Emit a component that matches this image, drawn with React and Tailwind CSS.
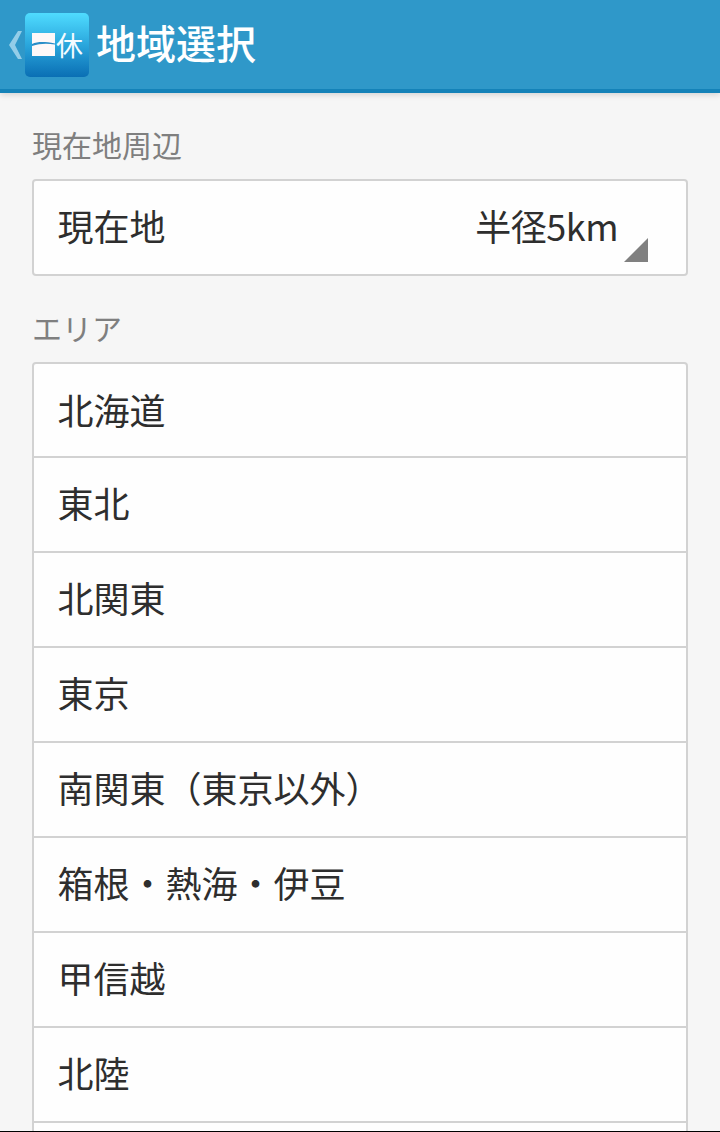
const items = ["北海道", "東北", "北関東", "東京", "南関東（東京以外）", "箱根・熱海・伊豆", "甲信越", "北陸", ""];

function Logo() {
  return (
    <div className="relative w-[64px] h-[64px] rounded-[5px] bg-gradient-to-b from-[#4fdcff] via-[#2aa6dc] to-[#0a6fb4] overflow-hidden shrink-0">
      <div className="absolute left-[7px] top-[20px] w-[23px] h-[23px] bg-[#fdf8f8]">
        <svg viewBox="0 0 23 23" className="w-full h-full">
          <path d="M0 11 C6 8.5 12 8.5 23 10.5 L23 11.5 C14 10 8 10.5 0 13 Z" fill="#2a8ec8" />
        </svg>
      </div>
      <span className="absolute left-[31px] top-[17px] text-[27px] leading-[30px] text-[#f4fbff]">休</span>
    </div>
  );
}

export default function App() {
  return (
    <div className="w-[720px] h-[1132px] flex flex-col bg-[#f6f6f6] font-['Noto_Sans_CJK_JP','Noto_Sans',sans-serif]">
      <div className="flex-1 min-h-0 overflow-hidden">
        <header className="h-[93px] bg-[#2f98c9] border-b-[4px] border-[#1482b8] shadow-[0_2px_6px_rgba(0,0,0,0.14)] flex items-start pt-[13px] pl-[8px]">
          <svg width="17" height="28" viewBox="0 0 17 28" className="mt-[18px] shrink-0">
            <path d="M10 0 L14 0 L7 14 L14 28 L10 28 L1 14 Z" fill="#93cde8" />
          </svg>
          <Logo />
          <h1 className="ml-[7px] text-[40px] leading-[58px] font-medium text-white">地域選択</h1>
        </header>
        <main className="px-[32px]">
          <h2 className="mt-[33px] h-[36px] text-[30px] leading-[36px] text-[#7f7f7f]">現在地周辺</h2>
          <div className="mt-[17px] h-[97px] rounded-[4px] border-2 border-[#d2d2d2] bg-[#fefefe] flex items-center justify-between pl-[23.5px] pb-[6px] relative">
            <span className="text-[36px] leading-[48px] text-[#2e2e2e]">現在地</span>
            <span className="text-[36px] leading-[48px] tracking-[-0.5px] text-[#2e2e2e] mr-[68px]">半径5km</span>
            <div className="absolute right-[38px] bottom-[12px] w-0 h-0 border-l-[24px] border-l-transparent border-b-[24px] border-b-[#808080]" />
          </div>
          <h2 className="mt-[33px] h-[36px] text-[30px] leading-[36px] text-[#7f7f7f]">エリア</h2>
          <ul className="mt-[17px] rounded-[4px] border-2 border-[#d2d2d2] bg-[#fefefe]">
            {items.map((t, i) => (
              <li key={i} className={`flex items-center pl-[23.5px] text-[36px] leading-[48px] text-[#2e2e2e] ${i ? "h-[95px] pb-[6px] border-t-2 border-[#d2d2d2]" : "h-[92px] pb-[3px]"}`}>
                {t}
              </li>
            ))}
          </ul>
        </main>
      </div>
      <div className="h-[1px] bg-black shrink-0" />
    </div>
  );
}
